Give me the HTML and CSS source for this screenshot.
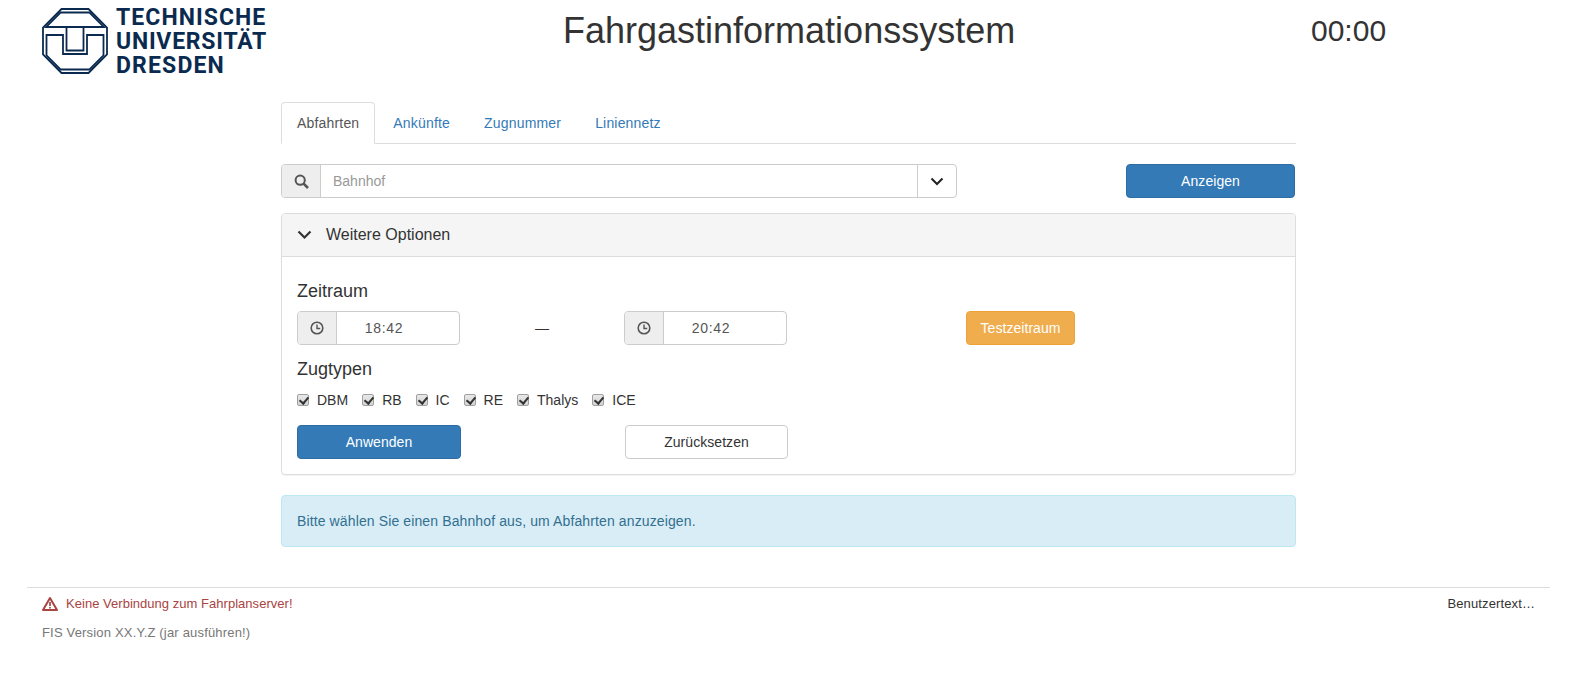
FILE: index.html
```html
<!DOCTYPE html>
<html lang="de">
<head>
<meta charset="utf-8">
<title>Fahrgastinformationssystem</title>
<link rel="stylesheet" href="styles.css">
</head>
<body>
<header class="top">
  <div class="logo">
    <svg class="logo-mark" viewBox="0 0 66 66" width="66" height="66" fill="none" stroke="#0b2a4f" stroke-width="1.8">
      <polygon points="19.5,1 46.5,1 65,19.5 65,46.5 46.5,65 19.5,65 1,46.5 1,19.5"/>
      <polygon points="18.5,4.5 47.5,4.5 62,19 4,19"/>
      <path d="M24.5 19V42.5H41.5V19"/>
      <path d="M4.5 27H21V46H45V27H61.5V47.5L47.5 61.5H18.5L4.5 47.5Z"/>
    </svg>
    <div class="logo-text">
      <span class="logo-line one">TECHNISCHE</span>
      <span class="logo-line two">UNIVERSITÄT</span>
      <span class="logo-line three">DRESDEN</span>
    </div>
  </div>
  <h1 class="title">Fahrgastinformationssystem</h1>
  <div class="clock">00:00</div>
</header>

<main class="content">
  <nav class="tabs">
    <a class="tab active">Abfahrten</a>
    <a class="tab">Ankünfte</a>
    <a class="tab">Zugnummer</a>
    <a class="tab">Liniennetz</a>
  </nav>

  <div class="search-row">
    <div class="input-group search">
      <span class="addon">
        <svg width="15" height="15" viewBox="0 0 15 15" fill="none" stroke="#555" stroke-width="2"><circle cx="6.2" cy="6.2" r="4.6"/><path d="M9.6 9.6L14 14" stroke-width="2.6"/></svg>
      </span>
      <input class="field" type="text" placeholder="Bahnhof">
      <span class="caret-btn">
        <svg width="14" height="9" viewBox="0 0 14 9" fill="none" stroke="#222" stroke-width="2"><path d="M1.5 1.5L7 7L12.5 1.5"/></svg>
      </span>
    </div>
    <button class="btn primary show">Anzeigen</button>
  </div>

  <section class="panel">
    <div class="panel-head">
      <svg width="15" height="10" viewBox="0 0 15 10" fill="none" stroke="#333" stroke-width="2.2"><path d="M1.5 1.5L7.5 7.5L13.5 1.5"/></svg>
      <span>Weitere Optionen</span>
    </div>
    <div class="panel-body">
      <h2 class="label">Zeitraum</h2>
      <div class="time-row">
        <div class="input-group">
          <span class="addon">
            <svg width="14" height="14" viewBox="0 0 14 14" fill="none" stroke="#555" stroke-width="1.6"><circle cx="7" cy="7" r="5.8"/><path d="M7 3.5V7.5H10.2" stroke-width="1.4"/></svg>
          </span>
          <input class="field time" type="text" value="18:42">
        </div>
        <span class="dash">—</span>
        <div class="input-group">
          <span class="addon">
            <svg width="14" height="14" viewBox="0 0 14 14" fill="none" stroke="#555" stroke-width="1.6"><circle cx="7" cy="7" r="5.8"/><path d="M7 3.5V7.5H10.2" stroke-width="1.4"/></svg>
          </span>
          <input class="field time" type="text" value="20:42">
        </div>
        <span></span>
        <button class="btn warning">Testzeitraum</button>
      </div>
      <h2 class="label types">Zugtypen</h2>
      <div class="checks">
        <label class="check"><input type="checkbox" checked>DBM</label>
        <label class="check"><input type="checkbox" checked>RB</label>
        <label class="check"><input type="checkbox" checked>IC</label>
        <label class="check"><input type="checkbox" checked>RE</label>
        <label class="check"><input type="checkbox" checked>Thalys</label>
        <label class="check"><input type="checkbox" checked>ICE</label>
      </div>
      <div class="actions">
        <button class="btn primary">Anwenden</button>
        <button class="btn plain">Zurücksetzen</button>
      </div>
    </div>
  </section>

  <div class="alert">Bitte wählen Sie einen Bahnhof aus, um Abfahrten anzuzeigen.</div>
</main>

<footer class="foot">
  <div class="foot-row">
    <div class="status">
      <svg width="16" height="14" viewBox="0 0 16 14"><path d="M8 1L15 13H1Z" fill="none" stroke="#a94442" stroke-width="2" stroke-linejoin="round"/><path d="M8 5V9M8 10V11.5" stroke="#a94442" stroke-width="1.7"/></svg>
      <span>Keine Verbindung zum Fahrplanserver!</span>
    </div>
    <div class="user">Benutzertext…</div>
  </div>
  <div class="version">FIS Version XX.Y.Z (jar ausführen!)</div>
</footer>
</body>
</html>
```
FILE: styles.css
```css
* { box-sizing: border-box; }
html, body { margin: 0; }
body {
  font-family: "Liberation Sans", Arial, sans-serif;
  font-size: 14px;
  line-height: 20px;
  color: #333;
  background: #fff;
}
.top {
  height: 102px;
  display: grid;
  grid-template-columns: 563px 748px auto;
  align-items: start;
}
.logo {
  display: flex;
  gap: 8px;
  padding: 8px 0 0 42px;
}
.logo-mark { flex: none; }
.logo-text {
  font-family: Roboto, "Liberation Sans", sans-serif;
  font-weight: 700;
  font-size: 23px;
  line-height: 24px;
  color: #0b2a4f;
  margin-top: -2px;
  white-space: nowrap;
}
.logo-line { display: block; }
.logo-line.one { letter-spacing: 1.05px; }
.logo-line.two { letter-spacing: 0.75px; }
.logo-line.three { letter-spacing: 1.15px; }
.title {
  margin: 11px 0 0;
  font-size: 36px;
  line-height: 40px;
  font-weight: 400;
  white-space: nowrap;
}
.clock {
  margin-top: 11px;
  font-size: 30px;
  line-height: 40px;
}
.content { width: 1015px; margin-left: 281px; }
.tabs {
  display: flex;
  height: 42px;
  border-bottom: 1px solid #ddd;
  letter-spacing: 0.18px;
}
.tab {
  height: 42px;
  padding: 10px 15px;
  margin-right: 2px;
  border: 1px solid transparent;
  border-radius: 4px 4px 0 0;
  color: #337ab7;
}
.tab.active {
  color: #555;
  background: #fff;
  border-color: #ddd #ddd #fff;
}
.search-row {
  display: flex;
  justify-content: space-between;
  margin-top: 20px;
  padding-right: 1px;
}
.input-group {
  display: flex;
  height: 34px;
  border: 1px solid #ccc;
  border-radius: 4px;
  overflow: hidden;
  background: #fff;
}
.input-group.search { width: 676px; }
.addon {
  flex: none;
  width: 39px;
  display: flex;
  align-items: center;
  justify-content: center;
  background: #eee;
  border-right: 1px solid #ccc;
}
.field {
  flex: 1;
  min-width: 0;
  border: 0;
  outline: 0;
  padding: 6px 12px;
  font: inherit;
  color: #555;
  background: transparent;
}
.field::placeholder { color: #999; opacity: 1; }
.field.time { text-align: center; padding: 6px 28px 6px 0; letter-spacing: 0.7px; }
.caret-btn {
  flex: none;
  width: 39px;
  display: flex;
  align-items: center;
  justify-content: center;
  border-left: 1px solid #ccc;
}
.btn {
  height: 34px;
  padding: 6px 12px;
  font: inherit;
  letter-spacing: 0.05px;
  border: 1px solid transparent;
  border-radius: 4px;
}
.primary { background: #337ab7; border-color: #2e6da4; color: #fff; }
.warning { background: #f0ad4e; border-color: #eea236; color: #fff; padding: 6px 0; }
.plain { background: #fff; border-color: #ccc; color: #333; }
.show { width: 169px; }
.panel {
  margin-top: 15px;
  height: 262px;
  border: 1px solid #ddd;
  border-radius: 4px;
  box-shadow: 0 1px 1px rgba(0, 0, 0, .05);
}
.panel-head {
  height: 43px;
  display: flex;
  align-items: center;
  gap: 14px;
  padding: 0 15px;
  background: #f5f5f5;
  border-bottom: 1px solid #ddd;
  border-radius: 3px 3px 0 0;
  font-size: 16px;
}
.panel-body { padding: 24px 15px 0; }
.label {
  margin: 0 0 10px;
  font-size: 18px;
  line-height: 20px;
  font-weight: 400;
}
.label.types { margin: 14px 0 11px; }
.time-row {
  display: grid;
  grid-template-columns: 163px 164px 163px 179px 109px;
  align-items: center;
}
.dash { text-align: center; }
.checks {
  display: flex;
  gap: 14px;
  height: 20px;
}
.check {
  display: flex;
  align-items: center;
  gap: 8px;
}
.check input {
  appearance: none;
  position: relative;
  flex: none;
  margin: 0;
  width: 12px;
  height: 12px;
  background: linear-gradient(#e8e8e8, #d4d4d4);
  border: 1px solid #a0a0a0;
  border-radius: 2px;
}
.check input:checked::after {
  content: "";
  position: absolute;
  left: 3px;
  top: 0;
  width: 4px;
  height: 7px;
  border: solid #333;
  border-width: 0 2px 2px 0;
  transform: rotate(40deg);
}
.actions {
  display: grid;
  grid-template-columns: 164px 164px 163px;
  margin-top: 15px;
}
.actions .plain { grid-column: 3; }
.alert {
  margin-top: 20px;
  height: 52px;
  padding: 15px 15px;
  background: #d9edf7;
  border: 1px solid #bce8f1;
  border-radius: 4px;
  color: #31708f;
  letter-spacing: 0.12px;
}
.foot {
  margin: 40px 35px 0 27px;
  border-top: 1px solid #ddd;
  padding: 6px 15px 0 15px;
  font-size: 13px;
  line-height: 20px;
  letter-spacing: 0.03px;
}
.foot-row { display: flex; justify-content: space-between; }
.status { display: flex; align-items: center; gap: 8px; color: #a94442; }
.user { color: #333; letter-spacing: 0.12px; }
.version { margin-top: 9px; color: #777; letter-spacing: 0.18px; }
```
